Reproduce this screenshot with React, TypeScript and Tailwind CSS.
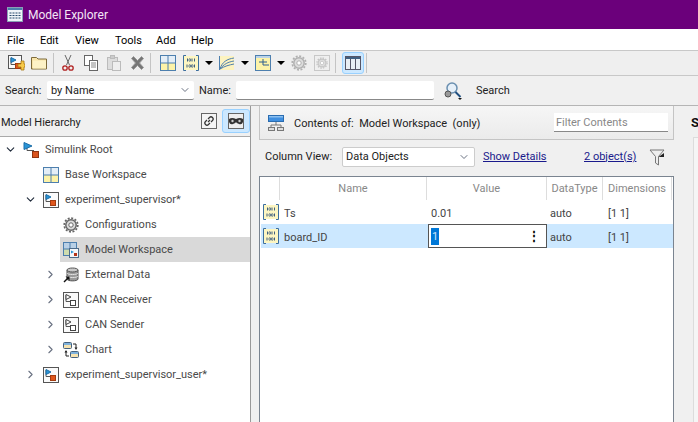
import React from 'react';
import { ChevronDown, ChevronRight } from 'lucide-react';

const font = "font-['Roboto','Noto_Sans',sans-serif]";

const BlockPair = ({ muted = false }: { muted?: boolean }) => (
  <>
    <path d="M3 3v6.500h4" fill="none" stroke="#555" />
    <path d="M3 2.500l5 2.500-5 2.500z" fill={muted ? '#fff' : '#2a94d6'} stroke={muted ? '#444' : '#1c6ea8'} />
    <rect x="7.500" y="8.500" width="5" height="5" fill={muted ? '#fff' : '#e0561c'} stroke={muted ? '#444' : '#a33c10'} />
  </>
);

const RootIcon = () => (
  <svg width="16" height="16" viewBox="0 0 16 16" className="shrink-0">
    <path d="M4 2v6.500h7" fill="none" stroke="#555" />
    <path d="M1 0.500l8 3.500-8 3.500z" fill="#2a94d6" stroke="#1c6ea8" />
    <rect x="9.500" y="9.500" width="6" height="6" fill="#d9541e" stroke="#8f3510" />
  </svg>
);

const ModelIcon = ({ muted = false }: { muted?: boolean }) => (
  <svg width="16" height="16" viewBox="0 0 16 16" className="shrink-0">
    <rect x="0.500" y="0.500" width="15" height="15" fill="#fafafa" stroke="#555" />
    <BlockPair muted={muted} />
  </svg>
);

const NewModelIcon = () => (
  <svg width="17" height="17" viewBox="0 0 17 17" className="shrink-0">
    <rect x="0.500" y="0.500" width="13" height="13" fill="#fafafa" stroke="#555" />
    <BlockPair />
    <path d="M10 9h3V6h3v3h1v3h-1v3h-3v-3h-3z" fill="#f7c948" stroke="#a87a14" strokeWidth="0.800" />
  </svg>
);

const FolderIcon = () => (
  <svg width="16" height="14" viewBox="0 0 16 14" className="shrink-0">
    <path d="M0.500 1.500h5l1.500 1.500h8.500v10H0.500z" fill="#f8e4a8" stroke="#7d6a3a" />
    <path d="M2 4.500h13v8H2z" fill="#fdf2c6" />
  </svg>
);

const GridIcon = () => (
  <svg width="16" height="16" viewBox="0 0 16 16" className="shrink-0">
    <rect x="0.500" y="0.500" width="15" height="15" fill="#fdf3a8" stroke="#4d7fae" />
    <rect x="1" y="1" width="14" height="7" fill="#e4eef7" />
    <path d="M8 1v14M1 8h14" stroke="#4d7fae" />
  </svg>
);

const WorkspaceIcon = () => (
  <svg width="16" height="16" viewBox="0 0 16 16" className="shrink-0">
    <rect x="0.500" y="0.500" width="13" height="13" fill="#cfdcae" stroke="#4d7fae" />
    <rect x="1" y="1" width="12" height="6" fill="#b9d0e6" />
    <path d="M7 1v12M1 7h12" stroke="#4d7fae" />
    <rect x="6.500" y="6.500" width="9" height="9" fill="#f4f7fb" stroke="#4d6a88" />
    <path d="M8 8.500l3 1.500-3 1.500z" fill="#2a94d6" />
    <rect x="11" y="11" width="3" height="3" fill="#b5341a" />
  </svg>
);

const Bits = () => (
  <>
    <path d="M4.500 3.500v3M9 3.500v3M11.500 3.500v3M4 9.500v3M11.500 9.500v3" stroke="#3f5f80" />
    <ellipse cx="6.800" cy="5" rx="0.900" ry="1.400" fill="none" stroke="#3f5f80" strokeWidth="0.800" />
    <ellipse cx="6.800" cy="11" rx="0.900" ry="1.400" fill="none" stroke="#3f5f80" strokeWidth="0.800" />
    <ellipse cx="9.200" cy="11" rx="0.900" ry="1.400" fill="none" stroke="#3f5f80" strokeWidth="0.800" />
  </>
);

const DataIcon = () => (
  <svg width="16" height="16" viewBox="0 0 16 16" className="shrink-0">
    <rect x="1" y="1" width="14" height="14" fill="#fdf6c2" />
    <path d="M3 0.500H0.500v15H3M13 0.500h2.500v15H13" fill="none" stroke="#3d6f9e" />
    <Bits />
  </svg>
);

const GearIcon = ({ color = '#666', size = 16 }: { color?: string; size?: number }) => (
  <svg width={size} height={size} viewBox="0 0 16 16" className="shrink-0">
    <circle cx="8" cy="8" r="5.200" fill="#ddd" stroke={color} strokeWidth="1.500" />
    <circle cx="8" cy="8" r="6.800" fill="none" stroke={color} strokeWidth="1.700" strokeDasharray="2 1.560" />
    <circle cx="8" cy="8" r="2.200" fill="#fff" stroke={color} />
  </svg>
);

const DatabaseIcon = () => (
  <svg width="16" height="16" viewBox="0 0 16 16" className="shrink-0">
    <path d="M4 3v9c0 2.500 11 2.500 11 0V3z" fill="#9a9a9a" stroke="#555" />
    <ellipse cx="9.500" cy="3" rx="5.500" ry="2" fill="#c9c9c9" stroke="#555" />
    <path d="M4 6c0 2 11 2 11 0M4 9c0 2 11 2 11 0" fill="none" stroke="#e4e4e4" />
    <path d="M1 15l4-4" stroke="#111" strokeWidth="1.500" />
    <path d="M2.500 9.500h4v4z" fill="#111" />
  </svg>
);

const ChartIcon = () => (
  <svg width="16" height="16" viewBox="0 0 16 16" className="shrink-0">
    <rect x="0.500" y="0.500" width="8" height="6" rx="1" fill="#f6e3b0" stroke="#44617f" />
    <rect x="1" y="1" width="7" height="2" fill="#7fb2dc" />
    <rect x="7.500" y="9.500" width="8" height="6" rx="1" fill="#f6e3b0" stroke="#44617f" />
    <rect x="8" y="10" width="7" height="2" fill="#7fb2dc" />
    <path d="M10 2h3v4M3 9v5h3" fill="none" stroke="#222" />
    <path d="M11.500 5.500h3L13 8zM1.500 10.500h3L3 8z" fill="#222" />
  </svg>
);

const ContentsIcon = () => (
  <svg width="18" height="18" viewBox="0 0 18 18" className="shrink-0">
    <rect x="1.500" y="1.500" width="15" height="6" fill="#3f8fe0" stroke="#2a6cb0" />
    <rect x="2" y="2" width="14" height="1.500" fill="#8cc0f0" />
    <path d="M9 8v3M4 13v-2h10v2" fill="none" stroke="#777" />
    <rect x="1.500" y="13.500" width="6" height="3" fill="#ddd" stroke="#777" />
    <rect x="10.500" y="13.500" width="6" height="3" fill="#ddd" stroke="#777" />
  </svg>
);

const Caret = ({ className = '' }: { className?: string }) => (
  <span className={`h-0 w-0 shrink-0 border-x-[4px] border-t-[4px] border-x-transparent border-t-black ${className}`} />
);

const TreeRow = ({
  indent,
  open,
  icon,
  label,
  selected,
}: {
  indent: number;
  open?: boolean;
  icon: React.ReactNode;
  label: string;
  selected?: boolean;
}) => (
  <div className="flex h-[25px] items-center" style={{ paddingLeft: indent }}>
    <span className="flex w-[20px] shrink-0 justify-center">
      {open === true && <ChevronDown size={13} className="text-gray-800" strokeWidth={2} />}
      {open === false && <ChevronRight size={13} className="text-gray-500" strokeWidth={2} />}
    </span>
    <div className={`flex h-[25px] flex-1 items-center gap-[6px] pl-[3px] ${selected ? 'bg-[#d9d9d9]' : ''}`}>
      {icon}
      <span className="pt-[2px] text-[11px] text-[#4a4a4a]">{label}</span>
    </div>
  </div>
);

const ToolSep = ({ className = '' }: { className?: string }) => (
  <div className={`h-[20px] w-px shrink-0 bg-[#c4c4c4] ${className}`} />
);

export default function App() {
  return (
    <div className={`flex h-[422px] w-[698px] flex-col overflow-hidden bg-[#f0f0f0] ${font}`}>
      {/* Title bar */}
      <div className="flex h-[29px] items-center gap-[5px] bg-[#6b007b] pl-[7px]">
        <svg width="16" height="15" viewBox="0 0 16 15">
          <rect x="0.500" y="0.500" width="15" height="14" fill="#eef3f8" stroke="#8aa0b5" />
          <rect x="1" y="1" width="14" height="2" fill="#4d7fae" />
          <path d="M2.500 6h11M2.500 8.500h11M2.500 11h11" stroke="#27486b" strokeDasharray="2 1" />
        </svg>
        <span className="text-[12px] text-[#f3e6f5]">Model Explorer</span>
      </div>

      {/* Menu */}
      <div className="flex h-[21px] items-center bg-white pl-[7px] pt-[4px] text-[11px] text-black">
        <span className="w-[33px]">File</span>
        <span className="w-[35px]">Edit</span>
        <span className="w-[40px]">View</span>
        <span className="w-[41px]">Tools</span>
        <span className="w-[35px]">Add</span>
        <span>Help</span>
      </div>

      {/* Toolbar */}
      <div className="flex h-[26px] items-center border-y border-[#c8c8c8] bg-[#efefef] pl-[8px]">
        <NewModelIcon />
        <div className="ml-[6px]"><FolderIcon /></div>
        <ToolSep className="ml-[6px]" />
        <svg width="14" height="16" viewBox="0 0 14 16" className="ml-[7px]">
          <path d="M4 0l4.500 10M10 0L5.500 10" stroke="#666" />
          <circle cx="4" cy="13" r="2.200" fill="none" stroke="#b02020" strokeWidth="1.300" />
          <circle cx="10" cy="13" r="2.200" fill="none" stroke="#b02020" strokeWidth="1.300" />
        </svg>
        <svg width="14" height="16" viewBox="0 0 14 16" className="ml-[9px]">
          <rect x="0.500" y="0.500" width="8" height="10" fill="#fff" stroke="#666" />
          <rect x="5.500" y="5.500" width="8" height="10" fill="#fff" stroke="#666" />
          <path d="M7 8h5M7 10h5M7 12h5" stroke="#888" />
        </svg>
        <svg width="14" height="16" viewBox="0 0 14 16" className="ml-[9px]">
          <rect x="0.500" y="2.500" width="10" height="12" fill="#ddd" stroke="#bbb" />
          <rect x="3.500" y="0.500" width="4" height="3" fill="#ccc" stroke="#bbb" />
          <rect x="5.500" y="6.500" width="8" height="9" fill="#eee" stroke="#bbb" />
        </svg>
        <svg width="17" height="16" viewBox="0 0 16 16" className="ml-[8px]">
          <path d="M2 3.500l2-2 4 4 4-4 2 2-4 4.500 4 4.500-2 2-4-4-4 4-2-2 4-4.500z" fill="#777" stroke="#999" />
        </svg>
        <ToolSep className="ml-[4px]" />
        <div className="ml-[9px]"><GridIcon /></div>
        <div className="ml-[7px]"><DataIcon /></div>
        <Caret className="ml-[6px]" />
        <svg width="16" height="16" viewBox="0 0 16 16" className="ml-[6px]">
          <rect x="1" y="1" width="14" height="14" fill="#fdf3c0" />
          <path d="M0.500 1v14" stroke="#4d7fae" />
          <path d="M1 14C3 7 8 4 15 3M1 14C5 9 9 7 15 6M1 14C6 11 10 10 15 9" fill="none" stroke="#4d7fae" />
        </svg>
        <Caret className="ml-[6px]" />
        <svg width="16" height="16" viewBox="0 0 16 16" className="ml-[6px]">
          <rect x="0.500" y="0.500" width="15" height="15" fill="#fdf3a8" stroke="#4d7fae" />
          <rect x="1" y="1" width="14" height="2" fill="#bcd3e8" />
          <path d="M8 4v6h6M4 7h8" fill="none" stroke="#2f5f8f" />
        </svg>
        <Caret className="ml-[6px]" />
        <div className="ml-[6px]"><GearIcon color="#b0b0b0" /></div>
        <div className="ml-[7px] flex h-[16px] w-[16px] items-center justify-center border border-[#c8c8c8]">
          <GearIcon color="#c4c4c4" size={12} />
        </div>
        <ToolSep className="ml-[5px]" />
        <div className="ml-[6px] flex h-[22px] w-[22px] items-center justify-center rounded-[3px] border border-[#99d1ff] bg-[#cce8ff]">
          <svg width="16" height="16" viewBox="0 0 16 16">
            <rect x="0.500" y="1.500" width="15" height="13" fill="#e8eef4" stroke="#556" />
            <rect x="1" y="2" width="14" height="2" fill="#3f5f80" />
            <path d="M5.500 4v10M10.500 4v10" stroke="#556" />
          </svg>
        </div>
        <ToolSep className="ml-[2px]" />
      </div>

      {/* Search bar */}
      <div className="flex h-[30px] items-center border-b border-[#b5b5b5] pl-[5px] text-[11px] text-[#222]">
        <span className="w-[42px] pt-[2px]">Search:</span>
        <div className="flex h-[19px] w-[147px] items-center justify-between rounded-[2px] border-b border-[#888] bg-white pl-[4px] pr-[3px]">
          <span className="pt-[2px]">by Name</span>
          <ChevronDown size={12} className="text-gray-500" />
        </div>
        <span className="ml-[5px] w-[37px] pt-[2px]">Name:</span>
        <div className="h-[19px] w-[198px] rounded-[2px] border-b border-[#888] bg-white" />
        <svg width="20" height="20" viewBox="0 0 20 20" className="ml-[9px]">
          <circle cx="9" cy="7" r="5" fill="#e6f0f9" stroke="#6a8fb0" strokeWidth="1.500" />
          <path d="M12.500 11l5 5" stroke="#1f4f80" strokeWidth="2" />
          <circle cx="5" cy="13" r="3" fill="#999" stroke="#555" />
          <path d="M15 17h4l-2 2z" fill="#111" />
        </svg>
        <span className="ml-[13px] pt-[2px]">Search</span>
      </div>

      {/* Panels */}
      <div className="flex min-h-0 flex-1">
        {/* Hierarchy */}
        <div className="flex w-[251px] shrink-0 flex-col border-r border-[#999]">
          <div className="flex h-[31px] shrink-0 items-center justify-between border-b border-[#aaa] text-[11px] text-[#222]">
            <span className="pl-[1px] pt-[4px]">Model Hierarchy</span>
            <div className="flex items-center gap-[5px]">
              <div className="flex h-[16px] w-[16px] items-center justify-center border border-[#666] bg-[#f4f4f4]">
                <svg width="12" height="12" viewBox="0 0 12 12">
                  <path d="M5 7l2-2M4 5L2.500 6.500a2 2 0 003 3L7 8M8 7l1.500-1.500a2 2 0 00-3-3L5 4" fill="none" stroke="#333" strokeWidth="1.200" />
                </svg>
              </div>
              <div className="flex h-[24px] w-[28px] items-center justify-center rounded-[3px] border border-[#99d1ff] bg-[#cce8ff]">
                <div className="flex h-[16px] w-[16px] items-center justify-center border border-[#666] bg-[#eee]">
                  <svg width="14" height="8" viewBox="0 0 14 8">
                    <path d="M0 2q3-2 7 0q4-2 7 0v3q-1 3-4 2t-3-2q0 1-3 2t-4-2z" fill="#333" />
                    <circle cx="3.500" cy="4" r="1.200" fill="#ccc" />
                    <circle cx="10.500" cy="4" r="1.200" fill="#ccc" />
                  </svg>
                </div>
              </div>
            </div>
          </div>
          <div className="flex-1 bg-white">
            <TreeRow indent={0} open icon={<RootIcon />} label="Simulink Root" />
            <TreeRow indent={20} icon={<GridIcon />} label="Base Workspace" />
            <TreeRow indent={20} open icon={<ModelIcon />} label="experiment_supervisor*" />
            <TreeRow indent={40} icon={<GearIcon />} label="Configurations" />
            <TreeRow indent={40} selected icon={<WorkspaceIcon />} label="Model Workspace" />
            <TreeRow indent={40} open={false} icon={<DatabaseIcon />} label="External Data" />
            <TreeRow indent={40} open={false} icon={<ModelIcon muted />} label="CAN Receiver" />
            <TreeRow indent={40} open={false} icon={<ModelIcon muted />} label="CAN Sender" />
            <TreeRow indent={40} open={false} icon={<ChartIcon />} label="Chart" />
            <TreeRow indent={20} open={false} icon={<ModelIcon />} label="experiment_supervisor_user*" />
          </div>
        </div>

        {/* Contents */}
        <div className="flex w-[423px] shrink-0 flex-col">
          <div className="ml-[8px] flex h-[34px] shrink-0 items-center justify-between border-x border-b border-[#c4c4c4] bg-linear-to-b from-[#f6f6f6] to-[#ebebeb] pl-[7px] pr-[5px] text-[11px] text-[#222]">
            <div className="flex items-center gap-[9px]">
              <ContentsIcon />
              <span className="pt-[4px]">Contents of:&nbsp; Model Workspace&nbsp; (only)</span>
            </div>
            <div className="flex h-[19px] w-[114px] items-center border-b border-[#888] bg-white pl-[2px] pt-[3px] text-[#888]">Filter Contents</div>
          </div>
          <div className="flex h-[36px] shrink-0 items-center pb-[2px] pl-[14px] text-[11px] text-[#222]">
            <span className="w-[77px]">Column View:</span>
            <div className="flex h-[20px] w-[133px] items-center justify-between rounded-[2px] border border-[#ccc] bg-white pl-[3px] pr-[4px]">
              <span>Data Objects</span>
              <ChevronDown size={12} className="text-gray-500" />
            </div>
            <span className="ml-[8px] w-[101px] text-[#1a1a8c] underline">Show Details</span>
            <span className="w-[65px] text-[#1a1a8c] underline">2 object(s)</span>
            <svg width="16" height="17" viewBox="0 0 16 17">
              <path d="M1 1h14l-5.500 6.500V16l-3-2V7.500z" fill="#eee" stroke="#777" />
              <path d="M9.500 8L15 4v4z" fill="#222" />
            </svg>
          </div>
          <div className="ml-[8px] flex-1 border-x border-t border-[#7a8490] bg-white">
            <div className="flex h-[23px] text-[11px] text-[#888]">
              <div className="w-[20px] border-r border-[#ddd]" />
              <div className="w-[147px] border-r border-[#ddd] text-center leading-[23px]">Name</div>
              <div className="w-[120px] border-r border-[#ddd] text-center leading-[23px]">Value</div>
              <div className="w-[56px] border-r border-[#ddd] text-center leading-[23px]">DataType</div>
              <div className="w-[69px] border-r border-[#ddd] text-center leading-[23px]">Dimensions</div>
            </div>
            <div className="flex h-[24px] items-center text-[11px] text-[#444]">
              <div className="flex w-[22px] justify-center"><DataIcon /></div>
              <div className="w-[149px] pl-[2px] pt-[4px]">Ts</div>
              <div className="w-[119px] pt-[4px]">0.01</div>
              <div className="w-[58px] pt-[4px]">auto</div>
              <div className="pt-[4px]">[1 1]</div>
            </div>
            <div className="ml-[1px] flex h-[24px] items-center bg-[#cce8ff] text-[11px] text-[#444]">
              <div className="flex w-[20px] justify-center"><DataIcon /></div>
              <div className="w-[147px] pl-[3px] pt-[4px]">board_ID</div>
              <div className="flex h-[24px] w-[119px] items-center justify-between border border-[#555] bg-white pl-[2px] pr-[6px]">
                <span className="bg-[#0078d7] px-[1px] leading-[17px] text-[#cfe6fa]">1</span>
                <span className="text-[12px] font-bold leading-none text-black">⋮</span>
              </div>
              <div className="w-[61px] pl-[3px] pt-[4px]">auto</div>
              <div className="pt-[4px]">[1 1]</div>
            </div>
          </div>
        </div>

        {/* Right edge */}
        <div className="flex flex-1 flex-col">
          <div className="h-[31px] pl-[17px] pt-[9px] text-[13px] font-bold leading-[15px] text-[#111]">S</div>
          <div className="ml-[19px] flex-1 border-l border-t border-[#dcdcdc] bg-[#f5f5f5]" />
        </div>
      </div>
    </div>
  );
}
